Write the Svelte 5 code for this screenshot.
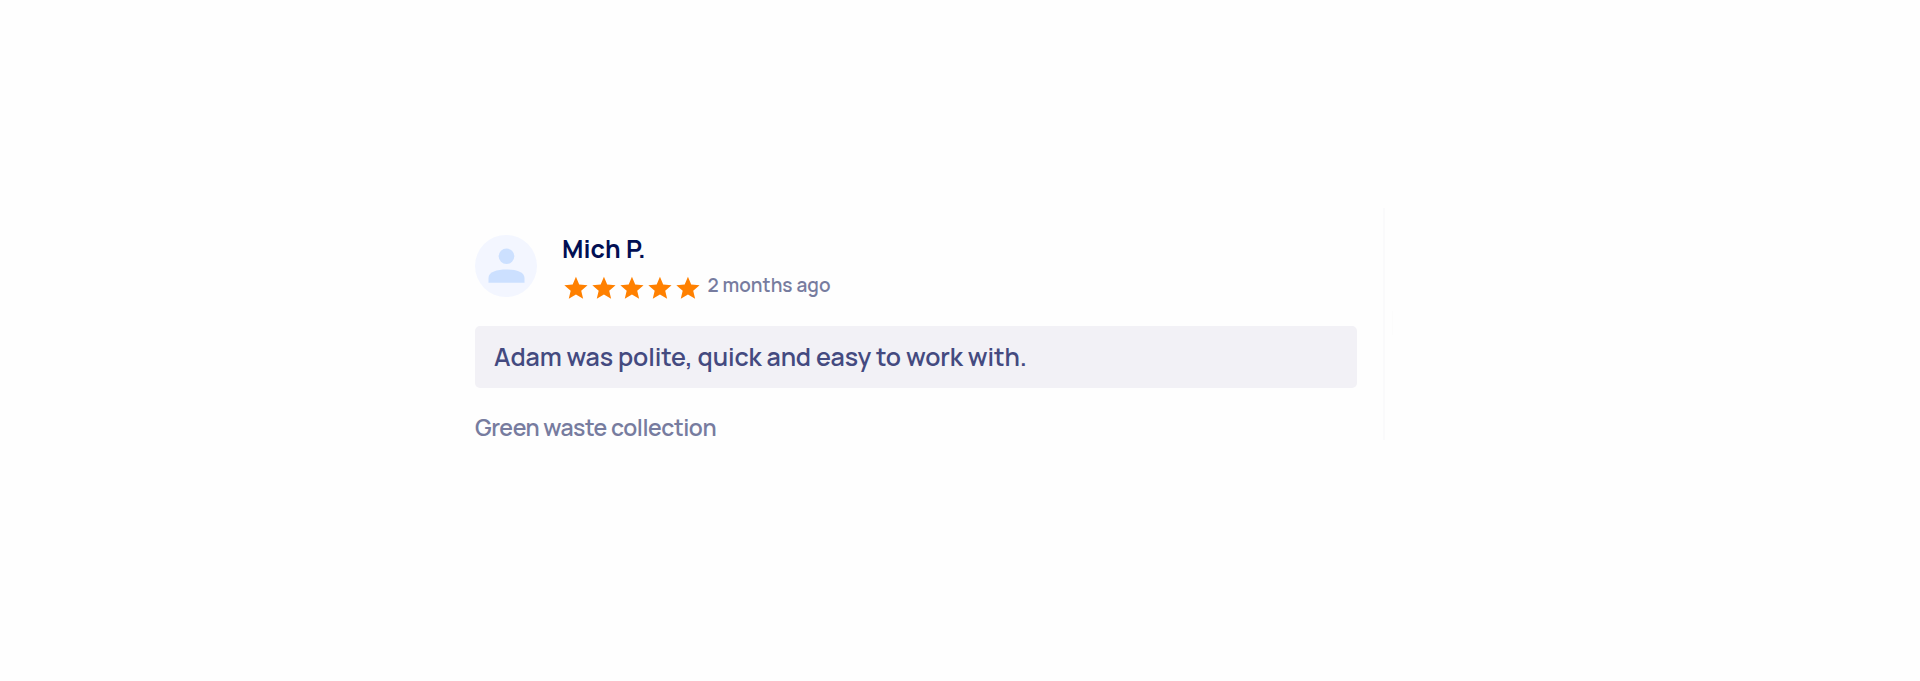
<script lang="ts">
    const name = "Mich P.";
    const posted = "2 months ago";
    const comment = "Adam was polite, quick and easy to work with.";
    const task = "Green waste collection";
    const stars = [1, 2, 3, 4, 5];
</script>

<main>
    <article class="review">
        <header class="reviewer">
            <svg class="avatar" viewBox="0 0 62 62" aria-hidden="true">
                <circle cx="31" cy="31" r="31" fill="#f3f6ff" />
                <circle cx="31.5" cy="21.3" r="7.8" fill="#cce0ff" />
                <path d="M13.5 47.8V43C13.5 37 22 34.6 31.5 34.6S49.5 37 49.5 43V47.8Z" fill="#cce0ff" />
            </svg>
            <div class="details">
                <div class="name"><span>{name}</span></div>
                <div class="rating">
                    <div class="stars">
                        {#each stars as star (star)}
                            <svg class="star" viewBox="0 0 24 24" aria-hidden="true">
                                <path d="M12 17.6 18.18 21.3l-1.64-7.03L22 9.54l-7.19-.61L12 2.3 9.19 8.93 2 9.54l5.46 4.73L5.82 21.3z" />
                            </svg>
                        {/each}
                    </div>
                    <span class="posted">{posted}</span>
                </div>
            </div>
        </header>
        <p class="comment"><span>{comment}</span></p>
        <p class="task"><span>{task}</span></p>
    </article>
    <div class="edge"></div>
</main>

<style>
    :global(body) {
        background: #fefefe;
    }

    main {
        display: flex;
        align-items: flex-start;
        height: 681px;
        padding: 208px 0 0 475px;
        box-sizing: border-box;

        font-family: Manrope, Inter, "Liberation Sans", sans-serif;
    }

    .review {
        width: 910px;
        height: 232px;
        padding: 27px 26.5px 0 0;
        box-sizing: border-box;
        border-right: 2px solid #fafafb;
    }

    .reviewer {
        display: flex;
        gap: 25px;
        height: 91px;
    }

    .avatar {
        width: 62px;
        height: 62px;
    }

    .name {
        height: 30px;

        color: #010f53;
        font-size: 25px;
        font-weight: 750;
        line-height: 28px;
        letter-spacing: 0.1px;
    }

    .rating {
        display: flex;
        align-items: flex-start;
        gap: 5px;
        padding-top: 9px;
    }

    .stars {
        display: flex;
    }

    .star {
        width: 27.9px;
        height: 28px;
        fill: #ff8000;
    }

    .posted {
        padding-left: 1px;

        color: #777c9f;
        font-size: 19px;
        font-weight: 600;
        line-height: 22px;
        letter-spacing: 0.05px;
    }

    .comment {
        height: 62px;
        margin: 0;
        padding: 0 19px;
        border-radius: 5px;
        background: #f2f1f6;

        color: #444a80;
        font-size: 25px;
        font-weight: 600;
        line-height: 62px;
        letter-spacing: -0.08px;
    }

    .task {
        margin: 24px 0 0;

        color: #777c9f;
        font-size: 23px;
        font-weight: 600;
        line-height: 30px;
        letter-spacing: -0.46px;
    }

    .edge {
        width: 1px;
        height: 24px;
        margin: 103px 0 0 7px;
        background: #fcfcfc;
    }
</style>
